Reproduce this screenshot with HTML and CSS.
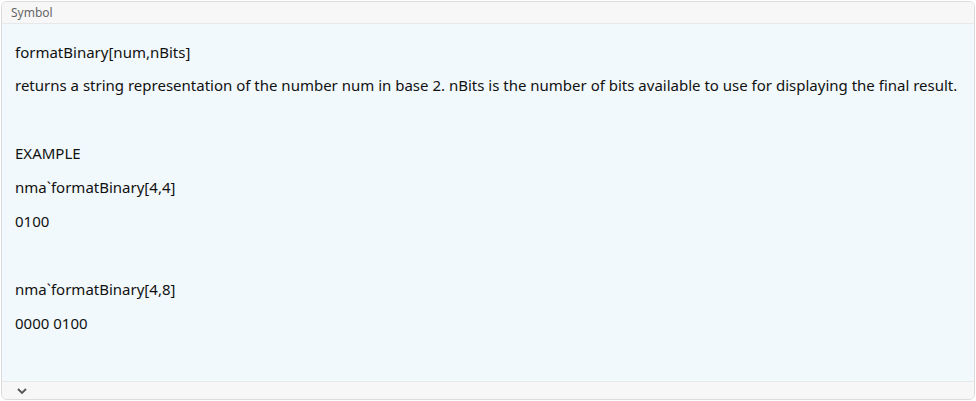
FILE: index.html
```html
<!DOCTYPE html>
<html>
<head>
<meta charset="utf-8">
<link rel="stylesheet" href="styles.css">
</head>
<body>
<div class="panel">
  <div class="panel-header">Symbol</div>
  <div class="panel-body">
    <p class="title">formatBinary[num,nBits]</p>
    <p>returns a string representation of the number num in base 2. nBits is the number of bits available to use for displaying the final result.</p>
    <p class="blank"></p>
    <p>EXAMPLE</p>
    <p>nma`formatBinary[4,4]</p>
    <p>0100</p>
    <p class="blank"></p>
    <p>nma`formatBinary[4,8]</p>
    <p>0000 0100</p>
  </div>
  <div class="panel-footer">
    <svg class="chev" width="10" height="6" viewBox="0 0 10 6"><path d="M1 1 L5 5 L9 1" fill="none" stroke="#555" stroke-width="1.8"/></svg>
  </div>
</div>
</body>
</html>
```
FILE: styles.css
```css
html, body {
  margin: 0;
  padding: 0;
  background: #ffffff;
}
body {
  padding: 1px;
  font-family: "Noto Sans", "Open Sans", sans-serif;
}
.panel {
  width: 974px;
  height: 399px;
  box-sizing: border-box;
  border: 1px solid #dcdcdc;
  border-radius: 6px;
  overflow: hidden;
  display: flex;
  flex-direction: column;
  background: #f2f9fc;
}
.panel-header {
  height: 21px;
  flex: none;
  background: #f7f7f7;
  border-bottom: 1px solid #e6e8ea;
  font-size: 12px;
  line-height: 21px;
  color: #666;
  padding-left: 9px;
}
.panel-body {
  flex: 1;
  padding: 18px 13px 0 13px;
  font-size: 15px;
  color: #111;
}
.panel-body p {
  margin: 0 0 14px 0;
  line-height: 20px;
  min-height: 20px;
  white-space: nowrap;
}
.panel-body p.title {
  margin-bottom: 13px;
}
.panel-footer {
  height: 17px;
  flex: none;
  background: #f7f7f7;
  border-top: 1px solid #e6e8ea;
  display: flex;
  align-items: center;
  padding-left: 15px;
}
.chev {
  display: block;
}
```
